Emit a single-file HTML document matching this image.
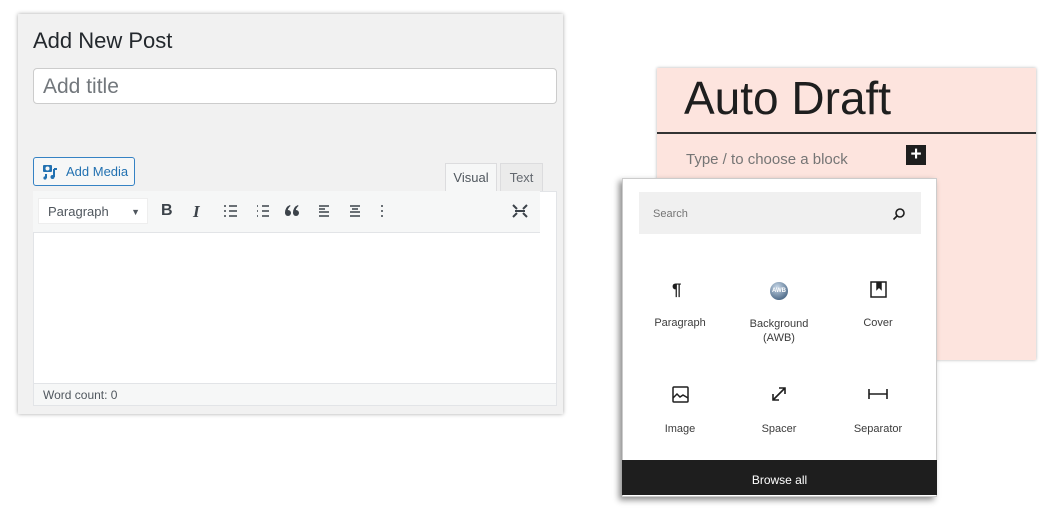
<!DOCTYPE html><html><head><style>
body{margin:0;width:1050px;height:510px;background:#fff;position:relative;font-family:"Liberation Sans",sans-serif;overflow:hidden}
.a{position:absolute}
</style></head><body>
<div class="a" style="left:18px;top:14px;width:545px;height:400px;background:#f1f1f1;box-shadow:0 0 4px rgba(0,0,0,.35)"></div>
<div class="a" style="left:33px;top:28px;font-size:22px;color:#23282d">Add New Post</div>
<div class="a" style="left:33px;top:68px;width:522px;height:34px;background:#fff;border:1px solid #ccc;border-radius:4px"></div>
<div class="a" style="left:43px;top:75px;font-size:21px;color:#72777c">Add title</div>
<div class="a" style="left:33px;top:157px;width:100px;height:27px;border:1px solid #3582c4;border-radius:3px;background:#f6f7f7;color:#2271b1;font-size:13px;line-height:27px">
<svg class="a" style="left:8px;top:6px" width="17" height="16" viewBox="0 0 17 16"><rect x="1" y="1" width="9" height="7" rx="1" fill="#2271b1"/><circle cx="5.5" cy="4.5" r="2" fill="#f6f7f7"/><path d="M12 5v8M12 5h3M4 10v4" stroke="#2271b1" stroke-width="2"/><circle cx="10.5" cy="13" r="2" fill="#2271b1"/><circle cx="3" cy="14" r="1.6" fill="#2271b1"/></svg>
<span style="position:absolute;left:32px">Add Media</span></div>
<div class="a" style="left:445px;top:163px;width:50px;height:28px;background:#f6f7f7;border:1px solid #dcdcde;border-bottom:none;font-size:13px;color:#50575e;text-align:center;line-height:28px">Visual</div>
<div class="a" style="left:500px;top:163px;width:41px;height:27px;background:#ebebeb;border:1px solid #dcdcde;font-size:13px;color:#646970;text-align:center;line-height:27px">Text</div>
<div class="a" style="left:33px;top:191px;width:524px;height:215px;background:#fff;border:1px solid #e2e4e7;box-sizing:border-box"></div>
<div class="a" style="left:33px;top:191px;width:507px;height:41px;background:#f6f7f7;border-bottom:1px solid #e2e4e7"></div>
<div class="a" style="left:38px;top:198px;width:110px;height:26px;background:#fff;border:1px solid #eee;font-size:13px;color:#50575e;line-height:26px;padding-left:9px;box-sizing:border-box">Paragraph<span style="position:absolute;right:7px;font-size:9px">▼</span></div>
<div class="a" style="left:161px;top:202px;font-size:16px;font-weight:bold;color:#3c434a">B</div>
<div class="a" style="left:193px;top:202px;font-size:17px;font-style:italic;font-family:'Liberation Serif',serif;font-weight:bold;color:#3c434a">I</div>
<svg class="a" style="left:222px;top:203px" width="310" height="16" viewBox="0 0 310 16" fill="none" stroke="#3c434a" stroke-width="1.6">
<path d="M2 3h2M2 8h2M2 13h2M7 3h8M7 8h8M7 13h8"/>
<path d="M35 3h1M35 8h1M35 13h1M40 3h7M40 8h7M40 13h7" />
<g fill="#3c434a" stroke="none"><circle cx="66" cy="10" r="3"/><circle cx="74" cy="10" r="3"/><path d="M63 10q0-6 5-8l.5 1q-3 2-3 7zM71 10q0-6 5-8l.5 1q-3 2-3 7z"/></g>
<path d="M97 3h10M97 6h6M97 9h10M97 13h10M128 3h10M130 6h6M128 9h10M128 13h10M159 3h2M159 8h2M159 13h2"/>
<path d="M291 2l4 4M305 2l-4 4M291 14l4-4M305 14l-4-4M293 8h10" stroke-width="2"/>
</svg>
<div class="a" style="left:34px;top:383px;width:522px;height:22px;background:#f6f7f7;border-top:1px solid #e2e4e7;font-size:12px;color:#50575e;line-height:22px;padding-left:9px;box-sizing:border-box">Word count: 0</div>

<div class="a" style="left:657px;top:68px;width:379px;height:292px;background:#fde4de;box-shadow:0 0 3px rgba(0,0,0,.3)"></div>
<div class="a" style="left:684px;top:71px;font-size:46px;color:#1e1e1e">Auto Draft</div>
<div class="a" style="left:657px;top:132px;width:379px;height:2px;background:#333"></div>
<div class="a" style="left:686px;top:151px;font-size:15px;color:#757575">Type / to choose a block</div>
<div class="a" style="left:906px;top:145px;width:20px;height:20px;background:#1e1e1e;color:#fff;font-size:19px;line-height:20px;text-align:center;font-weight:bold">+</div>

<div class="a" style="left:622px;top:178px;width:313px;height:317px;background:#fff;border:1px solid #ccc;box-shadow:-3px 3px 6px rgba(0,0,0,.45)"></div>
<div class="a" style="left:639px;top:192px;width:282px;height:42px;background:#f0f0f0;font-size:11px;color:#757575;line-height:44px;padding-left:14px;box-sizing:border-box">Search</div>
<svg class="a" style="left:892px;top:207px" width="14" height="14" viewBox="0 0 14 14" fill="none" stroke="#1e1e1e" stroke-width="1.6"><circle cx="8" cy="6" r="4"/><path d="M5 9l-3.5 3.5"/></svg>
<div class="a" style="left:672px;top:280px;font-size:17px;font-weight:bold;color:#1e1e1e">¶</div>
<div class="a" style="left:770px;top:282px;width:18px;height:18px;border-radius:50%;background:radial-gradient(circle at 40% 30%,#c8d8e8,#2a4a6c);font-size:6px;color:#fff;text-align:center;line-height:18px;font-weight:bold">AWB</div>
<svg class="a" style="left:870px;top:281px" width="17" height="17" viewBox="0 0 17 17" fill="none" stroke="#1e1e1e" stroke-width="1.5"><rect x="1" y="1" width="15" height="15"/><path d="M7 1v7l2-2 2 2V1" fill="#1e1e1e"/></svg>
<div class="a" style="left:630px;top:317px;width:100px;text-align:center;font-size:11px;color:#3c3c3c">Paragraph</div>
<div class="a" style="left:729px;top:317px;width:100px;text-align:center;font-size:11px;color:#3c3c3c;line-height:14px">Background<br>(AWB)</div>
<div class="a" style="left:828px;top:317px;width:100px;text-align:center;font-size:11px;color:#3c3c3c">Cover</div>
<svg class="a" style="left:672px;top:386px" width="17" height="17" viewBox="0 0 17 17" fill="none" stroke="#1e1e1e" stroke-width="1.5"><rect x="1" y="1" width="15" height="15" rx="1"/><path d="M1 12l4-4 3 3 3-2 5 3"/></svg>
<svg class="a" style="left:771px;top:386px" width="16" height="16" viewBox="0 0 16 16" fill="none" stroke="#1e1e1e" stroke-width="1.6"><path d="M2 14L14 2M8 2h6v6M2 8v6h6"/></svg>
<svg class="a" style="left:868px;top:388px" width="20" height="12" viewBox="0 0 20 12" fill="none" stroke="#1e1e1e" stroke-width="1.6"><path d="M1 1v10M19 1v10M1 6h18"/></svg>
<div class="a" style="left:630px;top:423px;width:100px;text-align:center;font-size:11px;color:#3c3c3c">Image</div>
<div class="a" style="left:729px;top:423px;width:100px;text-align:center;font-size:11px;color:#3c3c3c">Spacer</div>
<div class="a" style="left:828px;top:423px;width:100px;text-align:center;font-size:11px;color:#3c3c3c">Separator</div>
<div class="a" style="left:622px;top:460px;width:315px;height:35px;background:#1e1e1e;color:#fff;font-size:12px;text-align:center;line-height:40px">Browse all</div>
</body></html>
